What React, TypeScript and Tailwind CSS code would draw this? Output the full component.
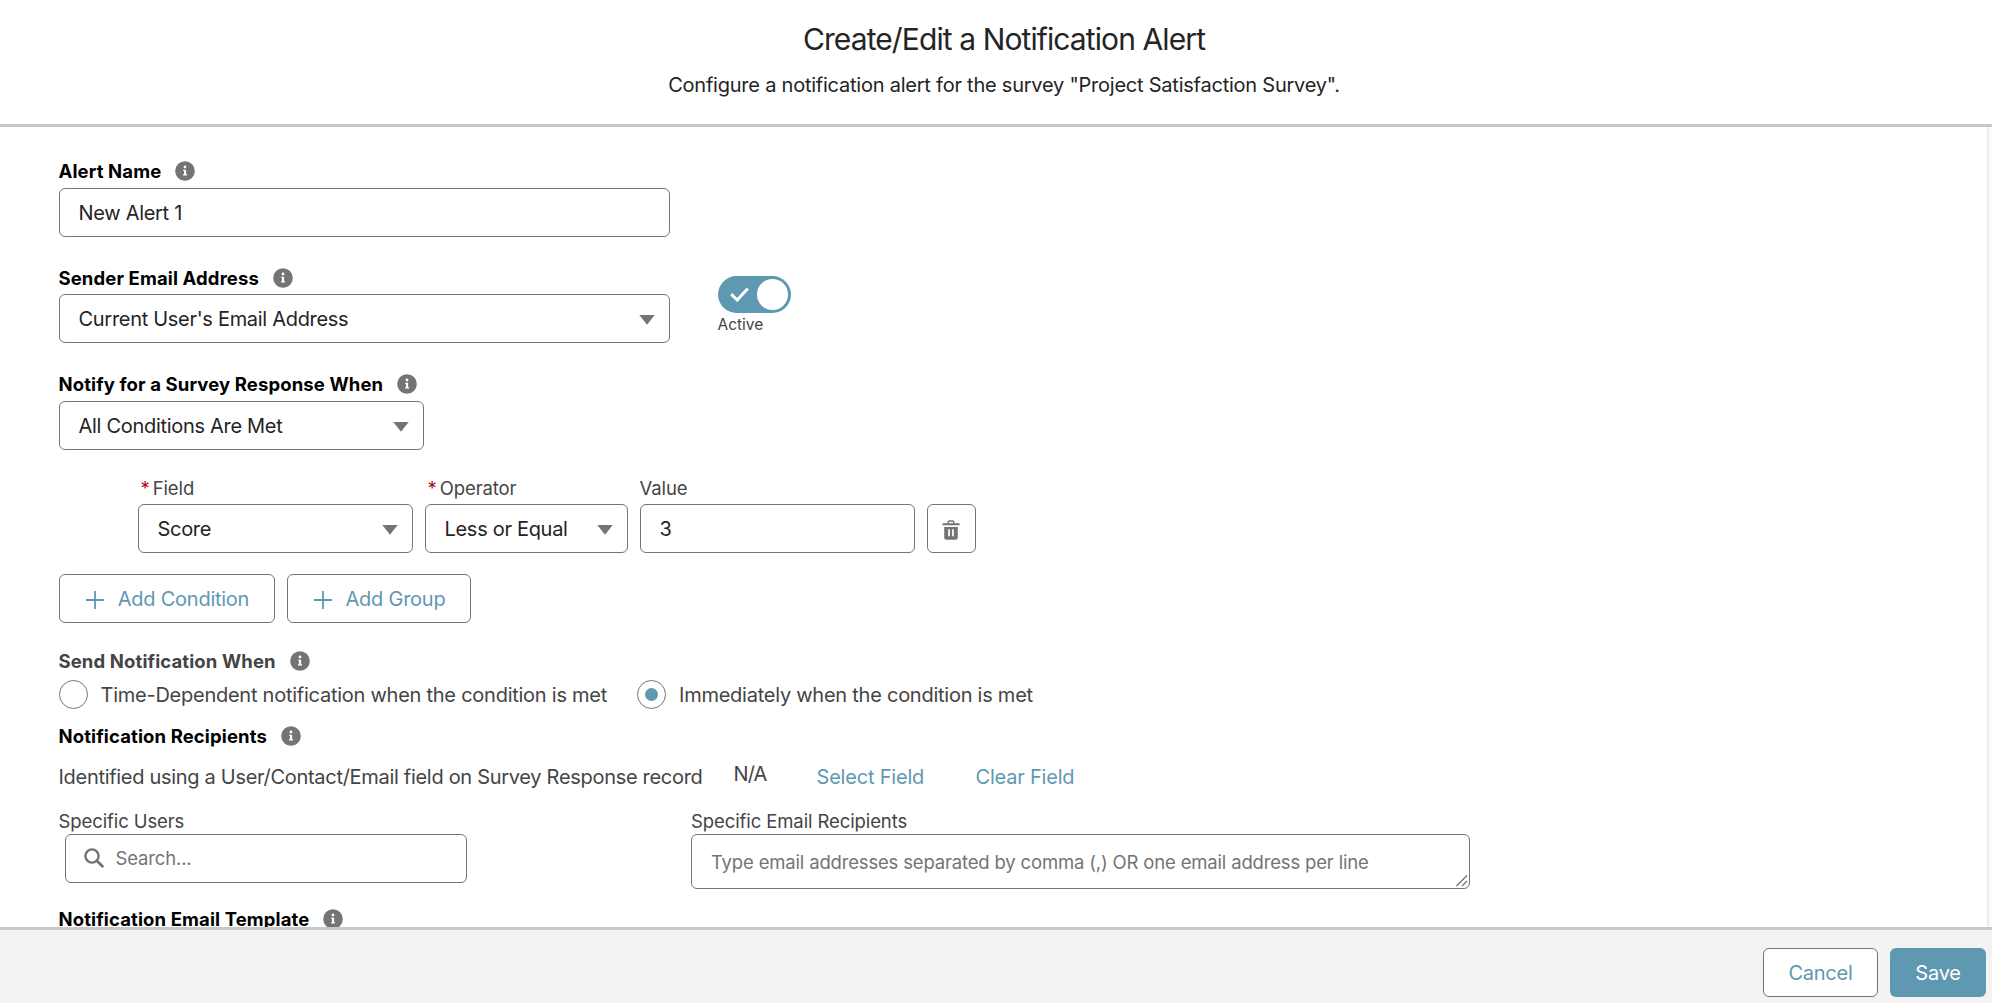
import type { ReactNode } from "react";

const InfoIcon = () => (
  <svg width="20" height="20" viewBox="0 0 20 20" className="shrink-0">
    <circle cx="10" cy="10" r="9.8" fill="#747474" />
    <circle cx="10" cy="6" r="1.4" fill="#fff" />
    <path d="M8.2 8.8h2.9v4.5h1v1.1H8v-1.1h1V9.9h-.8z" fill="#fff" />
  </svg>
);

const Caret = () => (
  <svg width="16" height="10" viewBox="0 0 16 10" className="mt-[2px] shrink-0">
    <path d="M0.3 0h15.4L8 9.8z" fill="#747474" />
  </svg>
);

const PlusIcon = () => (
  <svg width="18" height="18" viewBox="0 0 18 18" className="mt-[3px] shrink-0">
    <path d="M9 0v18M0 9h18" stroke="#5f98b1" strokeWidth="1.8" />
  </svg>
);

const TrashIcon = () => (
  <svg width="18" height="20" viewBox="0 0 18 20" className="mt-[2px]">
    <path d="M6.2 3.6V2.2c0-.8.5-1.3 1.3-1.3h3c.8 0 1.3.5 1.3 1.3v1.4" fill="none" stroke="#747474" strokeWidth="1.5" />
    <rect x="0.3" y="3.3" width="17.4" height="2" rx="0.9" fill="#747474" />
    <path
      fillRule="evenodd"
      d="M2.2 7h13.6v10.6c0 1.3-.9 2.2-2.2 2.2H4.4c-1.3 0-2.2-.9-2.2-2.2zM6.2 9.3v7h1.7v-7zM10.1 9.3v7h1.7v-7z"
      fill="#747474"
    />
  </svg>
);

const SearchIcon = () => (
  <svg width="20" height="20" viewBox="0 0 20 20" className="-mt-px shrink-0">
    <circle cx="8" cy="8" r="6.6" fill="none" stroke="#747474" strokeWidth="2.4" />
    <path d="M12.8 12.8l5.6 5.5" stroke="#747474" strokeWidth="2.8" strokeLinecap="round" />
  </svg>
);

const SectionLabel = ({ text, muted }: { text: string; muted?: boolean }) => (
  <div className="flex h-6 items-center gap-[14px]">
    <span
      className={`pt-[2px] text-[18.5px] font-bold tracking-[0.12px] whitespace-nowrap ${muted ? "text-[#444]" : "text-black"}`}
    >
      {text}
    </span>
    <InfoIcon />
  </div>
);

const SelectBox = ({ value, className }: { value: string; className: string }) => (
  <button
    type="button"
    className={`flex h-[49px] items-center justify-between rounded-md border border-[#747474] bg-white pr-[14px] pl-[19px] text-[20px] tracking-[-0.3px] text-[#242424] ${className}`}
  >
    <span className="whitespace-nowrap">{value}</span>
    <Caret />
  </button>
);

const FieldLabel = ({ text, required }: { text: string; required?: boolean }) => (
  <div className="flex h-6 items-center gap-[3px] pt-px text-[18.5px] tracking-[-0.1px] text-[#444]">
    {required && <span className="ml-[3px] text-[#ba0517]">*</span>}
    <span>{text}</span>
  </div>
);

const OutlineButton = ({ children, className }: { children: ReactNode; className: string }) => (
  <button
    type="button"
    className={`flex h-[49px] items-center justify-center rounded-md border border-[#747474] bg-white text-[20px] tracking-[-0.25px] whitespace-nowrap text-[#5f98b1] ${className}`}
  >
    {children}
  </button>
);

const RadioOption = ({ label, checked }: { label: string; checked?: boolean }) => (
  <div className="flex items-center gap-[13px]">
    <span className="flex h-[29px] w-[29px] items-center justify-center rounded-full border border-[#747474]">
      {checked && <span className="h-[13px] w-[13px] rounded-full bg-[#5f98b1]" />}
    </span>
    <span className="text-[20px] tracking-[-0.25px] whitespace-nowrap text-[#444]">{label}</span>
  </div>
);

const App = () => {
  return (
    <div className="flex h-[1003px] w-[1992px] flex-col overflow-hidden bg-white font-['Inter',sans-serif] text-[#242424]">
      <header className="flex h-[127px] shrink-0 flex-col items-center border-b-[3px] border-[#c7c7c7] pt-[19px] pl-4">
        <h1 className="text-[30px] leading-10 tracking-[-0.9px]">Create/Edit a Notification Alert</h1>
        <p className="mt-[11px] text-[20px] leading-[30px] tracking-[-0.23px]">
          Configure a notification alert for the survey "Project Satisfaction Survey".
        </p>
      </header>

      <main className="flex min-h-0 flex-1">
        <div className="flex h-[800px] flex-1 flex-col overflow-hidden pt-8 pl-[58.5px]">
          <SectionLabel text="Alert Name" />
          <input
            defaultValue="New Alert 1"
            className="mt-[5px] h-[49px] w-[611px] shrink-0 rounded-md border border-[#747474] px-[19px] text-[20px] tracking-[-0.3px]"
          />

          <div className="mt-[29px] flex h-[77px] shrink-0 gap-12">
            <div>
              <SectionLabel text="Sender Email Address" />
              <SelectBox value="Current User's Email Address" className="mt-1 w-[611px]" />
            </div>
            <div className="flex flex-col pt-[10px]">
              <div className="flex h-[37px] w-[73px] shrink-0 items-center justify-between rounded-full bg-[#5f98b1] pr-[3px] pl-3">
                <svg width="19" height="15" viewBox="0 0 19 15">
                  <path d="M1.2 7.2l6 5.8L17.8 1.5" fill="none" stroke="#fff" strokeWidth="3" />
                </svg>
                <span className="h-[31px] w-[31px] rounded-full bg-white" />
              </div>
              <span className="pt-px text-[15.5px] leading-[22px] text-[#444]">Active</span>
            </div>
          </div>

          <div className="mt-[29px] shrink-0">
            <SectionLabel text="Notify for a Survey Response When" />
            <SelectBox value="All Conditions Are Met" className="mt-[5px] w-[365px]" />
          </div>

          <div className="mt-[26px] ml-[79px] flex shrink-0 items-end gap-3">
            <div>
              <FieldLabel text="Field" required />
              <SelectBox value="Score" className="mt-1 w-[275px]" />
            </div>
            <div>
              <FieldLabel text="Operator" required />
              <SelectBox value="Less or Equal" className="mt-1 w-[203px]" />
            </div>
            <div>
              <FieldLabel text="Value" />
              <input
                defaultValue="3"
                className="mt-1 block h-[49px] w-[275px] rounded-md border border-[#747474] px-[19px] text-[20px]"
              />
            </div>
            <OutlineButton className="w-[49px]">
              <TrashIcon />
            </OutlineButton>
          </div>

          <div className="mt-[21px] flex shrink-0 gap-3">
            <OutlineButton className="w-[216px] gap-[14px] pl-[2px]">
              <PlusIcon />
              Add Condition
            </OutlineButton>
            <OutlineButton className="w-[184px] gap-[14px] pl-[2px]">
              <PlusIcon />
              Add Group
            </OutlineButton>
          </div>

          <div className="mt-[26px] shrink-0">
            <SectionLabel text="Send Notification When" muted />
          </div>
          <div className="mt-[7px] flex h-[29px] shrink-0 items-center gap-[30px]">
            <RadioOption label="Time-Dependent notification when the condition is met" />
            <RadioOption label="Immediately when the condition is met" checked />
          </div>

          <div className="mt-[15px] shrink-0">
            <SectionLabel text="Notification Recipients" />
          </div>
          <div className="mt-[14px] flex h-[30px] shrink-0 items-center text-[20px] tracking-[-0.2px] whitespace-nowrap text-[#444]">
            <span className="w-[675px] tracking-[-0.3px]">
              Identified using a User/Contact/Email field on Survey Response record
            </span>
            <span className="mb-[6px] w-[83px] tracking-[-0.9px]">N/A</span>
            <a className="w-[159px] text-[#5f98b1]">Select Field</a>
            <a className="text-[#5f98b1]">Clear Field</a>
          </div>

          <div className="mt-[17px] flex h-[79px] shrink-0">
            <div className="w-[632.5px]">
              <FieldLabel text="Specific Users" />
              <div className="mt-px ml-[6px] flex h-[49px] w-[402px] items-center gap-3 rounded-md border border-[#747474] pl-[18px]">
                <SearchIcon />
                <input
                  placeholder="Search..."
                  className="w-[300px] text-[18.5px] tracking-[-0.15px] outline-none placeholder:text-[#747474]"
                />
              </div>
            </div>
            <div>
              <FieldLabel text="Specific Email Recipients" />
              <div className="relative">
                <textarea
                  placeholder="Type email addresses separated by comma (,) OR one email address per line"
                  className="mt-px block h-[55px] w-[779px] resize-none rounded-md border border-[#747474] px-[19px] py-[13px] text-[18.5px] leading-7 tracking-[-0.17px] placeholder:text-[#747474]"
                />
                {/* resize grip */}
                <svg width="12" height="12" viewBox="0 0 12 12" className="absolute right-[2px] bottom-[2px]">
                  <path d="M0.5 11L11 0.5M6 11L11 6" stroke="#747474" strokeWidth="1.4" />
                </svg>
              </div>
            </div>
          </div>

          <div className="mt-[19px] shrink-0">
            <SectionLabel text="Notification Email Template" />
          </div>
        </div>
        {/* scrollbar gutter */}
        <div className="w-[5px] border-l-2 border-[#ebebeb] bg-[#fcfcfc]" />
      </main>

      <footer className="flex h-[76px] shrink-0 justify-end gap-3 border-t-[3px] border-[#c9c9c9] bg-[#f3f3f3] pt-[18px] pr-[6px]">
        <OutlineButton className="w-[115px]">Cancel</OutlineButton>
        <button
          type="button"
          className="h-[49px] w-[96px] rounded-md bg-[#5f98b1] text-[20px] tracking-[-0.25px] text-white"
        >
          Save
        </button>
      </footer>
    </div>
  );
};

export default App;
